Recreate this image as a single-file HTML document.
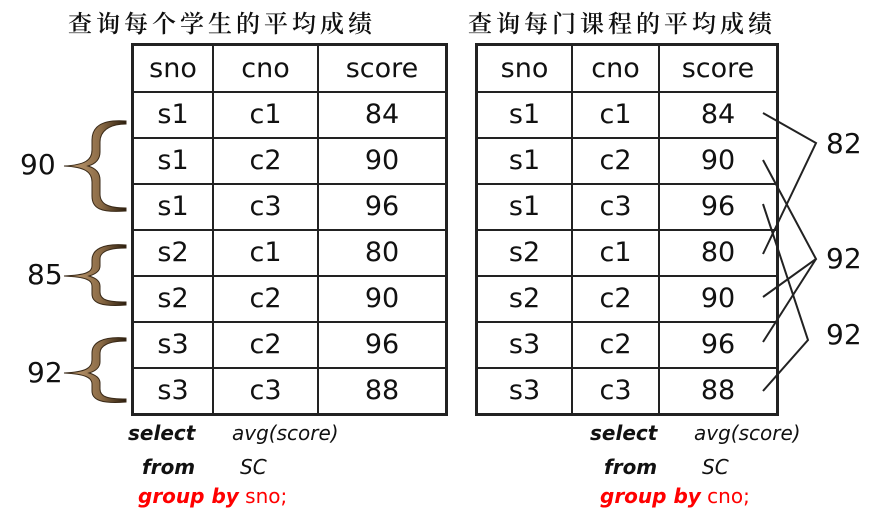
<!DOCTYPE html>
<html><head><meta charset="utf-8"><style>
body{margin:0;width:873px;height:509px;background:#fff;position:relative;overflow:hidden;font-family:"DejaVu Sans","Liberation Sans",sans-serif;color:#111}
.t{position:absolute;border-collapse:collapse;border:3px solid #222}
.t td{border:2px solid #222;text-align:center;font-size:27px;padding:0;height:44px;line-height:44px}
.title{position:absolute;top:4px;font-family:"Noto Serif CJK SC","WenQuanYi Zen Hei",serif;font-size:24px;letter-spacing:4px;font-weight:600}
.lab{position:absolute;font-size:28px}
.q{position:absolute;font-size:20px;font-style:italic}
.b{font-weight:bold}
.r{color:#f00}
</style></head><body>
<div class="title" style="left:68px">查询每个学生的平均成绩</div>
<div class="title" style="left:468px">查询每门课程的平均成绩</div>
<table class="t" style="left:131px;top:43px;width:317px">
<tr><td style="width:78px;height:45px">sno</td><td style="width:103px">cno</td><td>score</td></tr>
<tr><td>s1</td><td>c1</td><td>84</td></tr>
<tr><td>s1</td><td>c2</td><td>90</td></tr>
<tr><td>s1</td><td>c3</td><td>96</td></tr>
<tr><td>s2</td><td>c1</td><td>80</td></tr>
<tr><td>s2</td><td>c2</td><td>90</td></tr>
<tr><td>s3</td><td>c2</td><td>96</td></tr>
<tr><td>s3</td><td>c3</td><td>88</td></tr>
</table>
<table class="t" style="left:475px;top:43px;width:304px">
<tr><td style="width:93px;height:45px">sno</td><td style="width:85px">cno</td><td>score</td></tr>
<tr><td>s1</td><td>c1</td><td>84</td></tr>
<tr><td>s1</td><td>c2</td><td>90</td></tr>
<tr><td>s1</td><td>c3</td><td>96</td></tr>
<tr><td>s2</td><td>c1</td><td>80</td></tr>
<tr><td>s2</td><td>c2</td><td>90</td></tr>
<tr><td>s3</td><td>c2</td><td>96</td></tr>
<tr><td>s3</td><td>c3</td><td>88</td></tr>
</table>
<svg style="position:absolute;left:0;top:0" width="873" height="509">
<defs><linearGradient id="g" x1="0" x2="1"><stop offset="0" stop-color="#c9a47a"/><stop offset="0.6" stop-color="#8a6a45"/><stop offset="1" stop-color="#2a1c0c"/></linearGradient></defs>
<g fill="url(#g)" stroke="#3a2a18" stroke-width="1">
<path d="M126 121 C100 119 92 128 92 140 L92 150 C92 160 85 165 64 166 C85 167 92 172 92 182 L92 196 C92 208 100 213 126 211 L126 208 C108 208 100 204 100 194 L100 180 C100 172 95 168 88 166 C95 164 100 160 100 152 L100 142 C100 132 108 124 126 124 Z"/>
<path d="M126 245 C102 243 92 250 92 260 L92 266 C92 272 86 275 64 276 C86 277 92 280 92 286 L92 294 C92 303 102 307 126 305 L126 302 C108 302 100 300 100 292 L100 286 C100 281 96 278 89 276 C96 274 100 271 100 266 L100 259 C100 252 108 248 126 248 Z"/>
<path d="M126 338 C102 336 92 343 92 353 L92 360 C92 368 86 372 64 373 C86 374 92 378 92 384 L92 391 C92 400 102 404 126 402 L126 399 C108 399 100 397 100 389 L100 383 C100 378 96 375 89 373 C96 371 100 367 100 362 L100 353 C100 346 108 341 126 341 Z"/>
</g>
<g stroke="#222" stroke-width="2" fill="none">
<polyline points="763,113 816,143 763,254"/>
<polyline points="763,160 816,259 763,297"/>
<polyline points="763,342 816,259"/>
<polyline points="763,204 808,340 763,391"/>
</g>
</svg>
<div class="lab" style="left:20px;top:148px">90</div>
<div class="lab" style="left:27px;top:258px">85</div>
<div class="lab" style="left:27px;top:356px">92</div>
<div class="lab" style="left:826px;top:127px">82</div>
<div class="lab" style="left:826px;top:242px">92</div>
<div class="lab" style="left:826px;top:318px">92</div>
<div class="q b" style="left:128px;top:421px">select</div>
<div class="q" style="left:232px;top:421px">avg(score)</div>
<div class="q b" style="left:142px;top:455px">from</div>
<div class="q" style="left:240px;top:455px">SC</div>
<div class="q" style="left:138px;top:484px"><span class="b r">group by</span><span class="r" style="font-style:normal"> sno;</span></div>
<div class="q b" style="left:590px;top:421px">select</div>
<div class="q" style="left:694px;top:421px">avg(score)</div>
<div class="q b" style="left:604px;top:455px">from</div>
<div class="q" style="left:702px;top:455px">SC</div>
<div class="q" style="left:600px;top:484px"><span class="b r">group by</span><span class="r" style="font-style:normal"> cno;</span></div>
</body></html>
